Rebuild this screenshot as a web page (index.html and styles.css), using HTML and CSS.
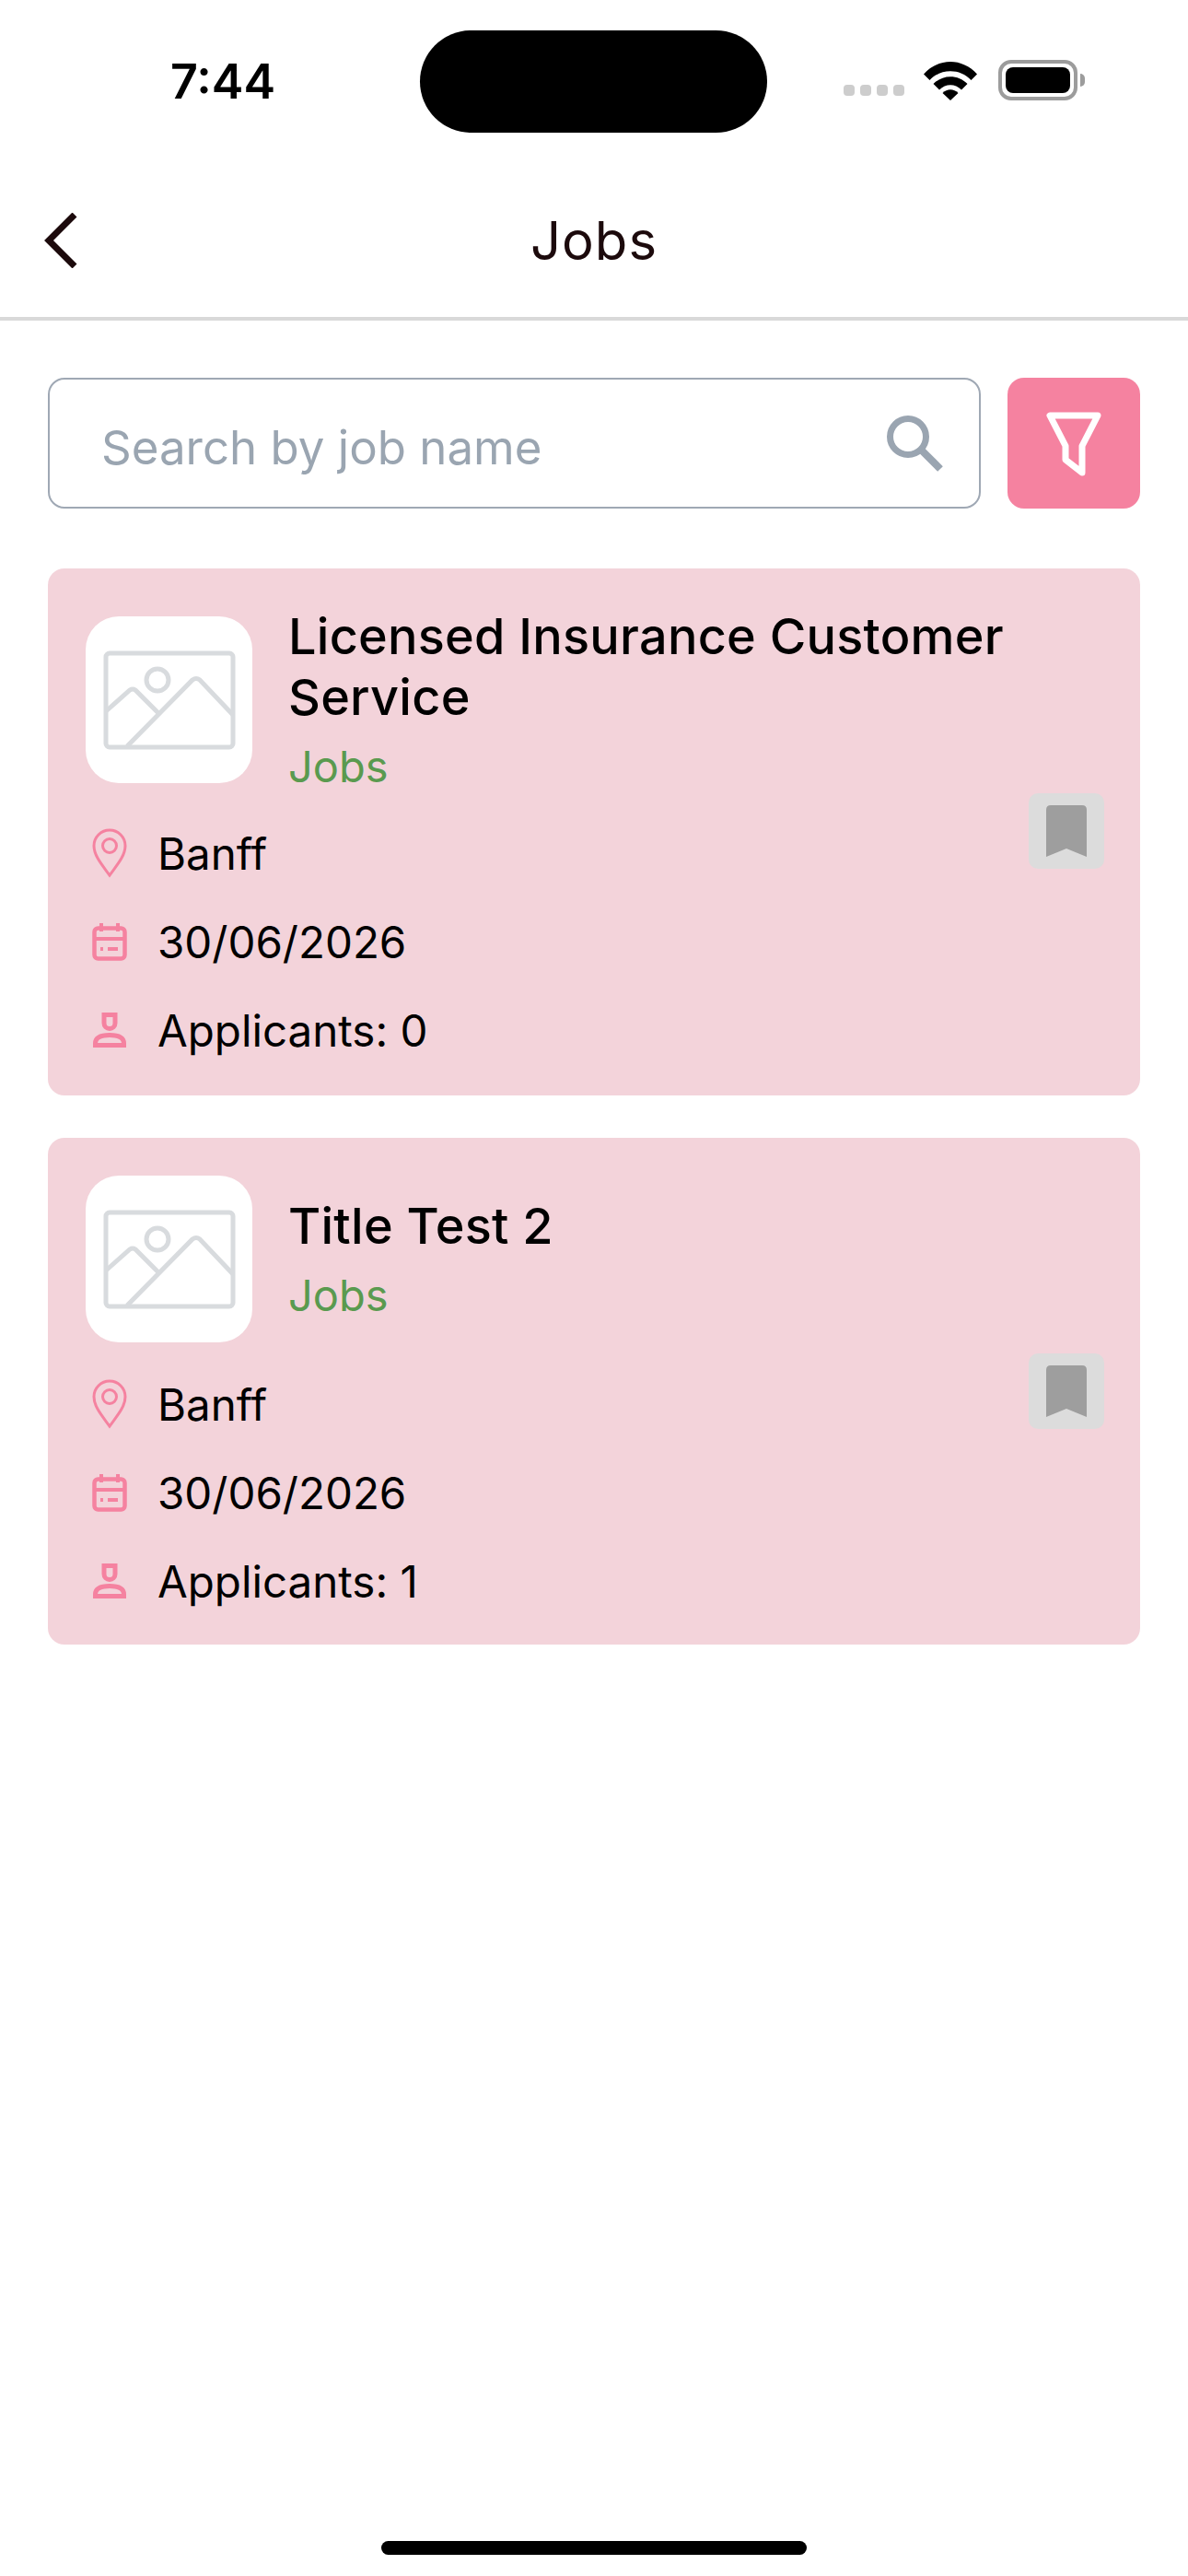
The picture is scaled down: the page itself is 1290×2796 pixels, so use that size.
FILE: index.html
```html
<!DOCTYPE html>
<html lang="en">
<head>
    <meta charset="UTF-8">
    <meta name="viewport" content="width=device-width, initial-scale=1.0">
    <title>Jobs</title>
    <link rel="stylesheet" href="styles.css">
</head>
<body>
    <div class="page">
        <div class="status-bar">
            <span class="time">7:44</span>
            <div class="island"></div>
            <div class="status-icons">
                <div class="signal"><span></span><span></span><span></span><span></span></div>
                <svg class="wifi" width="58" height="42" viewBox="0 0 58 42">
                    <path d="M0 13.5C16-4.500 42-4.500 58 13.500L51.500 20C39.500 7 18.500 7 6.500 20Z" fill="#000"/>
                    <path d="M10.500 24C20.500 13.500 37.500 13.500 47.500 24L41 30.500C34 23.500 24 23.500 17 30.500Z" fill="#000"/>
                    <path d="M20.500 34C25.500 29 32.500 29 37.500 34L29 42Z" fill="#000"/>
                </svg>
                <div class="battery"><div class="battery-level"></div></div>
                <div class="battery-cap"></div>
            </div>
        </div>

        <header class="top-bar">
            <svg class="back" width="36" height="60" viewBox="0 0 36 60">
                <path d="M33 2L5 30l28 28" fill="none" stroke="#1c0a0c" stroke-width="7"/>
            </svg>
            <h1>Jobs</h1>
        </header>

        <main class="content">
            <div class="search-row">
                <div class="search-box">
                    <span class="search-text">Search by job name</span>
                    <svg width="64" height="64" viewBox="0 0 64 64">
                        <circle cx="25" cy="25" r="19.500" fill="none" stroke="#9aa5b1" stroke-width="7"/>
                        <path d="M39 39l21 21" fill="none" stroke="#9aa5b1" stroke-width="8"/>
                    </svg>
                </div>
                <button class="filter-btn">
                    <svg width="64" height="72" viewBox="0 0 64 72">
                        <path d="M6 6h52L41 39v29L23 54V39Z" fill="none" stroke="#fff" stroke-width="7" stroke-linejoin="round"/>
                    </svg>
                </button>
            </div>

            <div class="job-card card-long">
                <div class="job-body">
                    <div class="job-head">
                        <div class="thumb">
                            <svg width="144" height="108" viewBox="0 0 144 108">
                                <rect x="3" y="3" width="138" height="102" rx="4" fill="none" stroke="#d8dbde" stroke-width="5"/>
                                <circle cx="59" cy="32" r="12" fill="none" stroke="#d8dbde" stroke-width="5"/>
                                <path d="M3 66l26-23q3-2 6 0l27 27" fill="none" stroke="#d8dbde" stroke-width="5"/>
                                <path d="M26 104l71-72q4-3 8 0l36 38" fill="none" stroke="#d8dbde" stroke-width="5"/>
                            </svg>
                        </div>
                        <div class="job-title">
                            <h2>Licensed Insurance Customer Service</h2>
                            <p class="job-type">Jobs</p>
                        </div>
                    </div>
                    <ul class="job-info">
                        <li>
                            <svg width="38" height="54" viewBox="0 0 38 54">
                                <path d="M19 51C11 40 2 30 2 19a17 17 0 0 1 34 0C36 30 27 40 19 51Z" fill="none" stroke="#f582a0" stroke-width="3"/>
                                <circle cx="19" cy="19" r="7.500" fill="none" stroke="#f582a0" stroke-width="3"/>
                            </svg>
                            Banff
                        </li>
                        <li>
                            <svg width="38" height="42" viewBox="0 0 38 42">
                                <rect x="2.500" y="6.500" width="33" height="33" rx="4" fill="none" stroke="#f582a0" stroke-width="4.500"/>
                                <path d="M2 18h34M10 1v9M28 1v9M9 29h3M17 29h11" fill="none" stroke="#f582a0" stroke-width="4"/>
                            </svg>
                            30/06/2026
                        </li>
                        <li>
                            <svg width="36" height="38" viewBox="0 0 36 38">
                                <path d="M12 2.500h12v9a6 6 0 0 1-12 0Z" fill="none" stroke="#f582a0" stroke-width="5"/>
                                <path d="M2.500 35.500v-2c0-6 5.500-9 15.500-9s15.500 3 15.500 9v2Z" fill="none" stroke="#f582a0" stroke-width="5"/>
                            </svg>
                            Applicants: 0
                        </li>
                    </ul>
                </div>
                <button class="bookmark">
                    <svg width="44" height="56" viewBox="0 0 44 56"><path d="M0 5q0-5 5-5h34q5 0 5 5v51L22 47 0 56Z" fill="#9e9e9e"/></svg>
                </button>
            </div>

            <div class="job-card card-short">
                <div class="job-body">
                    <div class="job-head">
                        <div class="thumb">
                            <svg width="144" height="108" viewBox="0 0 144 108">
                                <rect x="3" y="3" width="138" height="102" rx="4" fill="none" stroke="#d8dbde" stroke-width="5"/>
                                <circle cx="59" cy="32" r="12" fill="none" stroke="#d8dbde" stroke-width="5"/>
                                <path d="M3 66l26-23q3-2 6 0l27 27" fill="none" stroke="#d8dbde" stroke-width="5"/>
                                <path d="M26 104l71-72q4-3 8 0l36 38" fill="none" stroke="#d8dbde" stroke-width="5"/>
                            </svg>
                        </div>
                        <div class="job-title">
                            <h2>Title Test 2</h2>
                            <p class="job-type">Jobs</p>
                        </div>
                    </div>
                    <ul class="job-info">
                        <li>
                            <svg width="38" height="54" viewBox="0 0 38 54">
                                <path d="M19 51C11 40 2 30 2 19a17 17 0 0 1 34 0C36 30 27 40 19 51Z" fill="none" stroke="#f582a0" stroke-width="3"/>
                                <circle cx="19" cy="19" r="7.500" fill="none" stroke="#f582a0" stroke-width="3"/>
                            </svg>
                            Banff
                        </li>
                        <li>
                            <svg width="38" height="42" viewBox="0 0 38 42">
                                <rect x="2.500" y="6.500" width="33" height="33" rx="4" fill="none" stroke="#f582a0" stroke-width="4.500"/>
                                <path d="M2 18h34M10 1v9M28 1v9M9 29h3M17 29h11" fill="none" stroke="#f582a0" stroke-width="4"/>
                            </svg>
                            30/06/2026
                        </li>
                        <li>
                            <svg width="36" height="38" viewBox="0 0 36 38">
                                <path d="M12 2.500h12v9a6 6 0 0 1-12 0Z" fill="none" stroke="#f582a0" stroke-width="5"/>
                                <path d="M2.500 35.500v-2c0-6 5.500-9 15.500-9s15.500 3 15.500 9v2Z" fill="none" stroke="#f582a0" stroke-width="5"/>
                            </svg>
                            Applicants: 1
                        </li>
                    </ul>
                </div>
                <button class="bookmark">
                    <svg width="44" height="56" viewBox="0 0 44 56"><path d="M0 5q0-5 5-5h34q5 0 5 5v51L22 47 0 56Z" fill="#9e9e9e"/></svg>
                </button>
            </div>
        </main>

        <div class="home-bar"><span></span></div>
    </div>
</body>
</html>
```

FILE: styles.css
```css
* {
    box-sizing: border-box;
}

body {
    margin: 0;
    background: #fff;
    font-family: 'Inter', sans-serif;
    color: #000;
}

.page {
    width: 1290px;
    height: 2796px;
    display: flex;
    flex-direction: column;
}

/* status bar */
.status-bar {
    height: 144px;
    padding-top: 33px;
    display: flex;
    align-items: flex-start;
}

.time {
    width: 456px;
    padding: 26px 0 0 185px;
    font-family: 'Inter', sans-serif;
    font-size: 52px;
    line-height: 60px;
    font-weight: 600;
}

.island {
    width: 377px;
    height: 111px;
    background: #000;
    border-radius: 56px;
}

.status-icons {
    margin-left: 83px;
    padding-top: 32px;
    display: flex;
    align-items: flex-end;
    height: 76px;
}

.signal {
    display: flex;
    gap: 6px;
    margin-bottom: 5px;
}

.signal span {
    width: 12px;
    height: 12px;
    border-radius: 4px;
    background: #cdcdcd;
}

.wifi {
    margin-left: 21px;
}

.battery {
    width: 86px;
    height: 44px;
    margin-left: 23px;
    padding: 4px;
    border: 4px solid #9c9c9c;
    border-radius: 14px;
}

.battery-level {
    width: 100%;
    height: 100%;
    background: #000;
    border-radius: 8px;
}

.battery-cap {
    width: 5px;
    height: 14px;
    margin: 0 0 15px 3px;
    background: #9c9c9c;
    border-radius: 0 5px 5px 0;
}

/* header */
.top-bar {
    height: 204px;
    padding-left: 48px;
    padding-top: 34px;
    display: flex;
    align-items: center;
    border-bottom: 4px solid #d9d9d9;
    position: relative;
}

.top-bar h1 {
    margin: 0;
    position: absolute;
    left: 0;
    right: 0;
    text-align: center;
    font-size: 58px;
    font-weight: 400;
    letter-spacing: 1px;
    color: #1c0a0c;
}

/* search */
.content {
    flex: 1;
    padding: 62px 52px 0;
}

.search-row {
    display: flex;
    gap: 29px;
    margin-bottom: 65px;
}

.search-box {
    flex: 1;
    height: 142px;
    padding: 0 38px 0 56px;
    display: flex;
    align-items: center;
    justify-content: space-between;
    border: 2px solid #9fa8b4;
    border-radius: 18px;
}

.search-text {
    padding-top: 9px;
    font-size: 51px;
    color: #9aa5b1;
}

.filter-btn {
    width: 144px;
    height: 142px;
    padding: 0;
    border: none;
    border-radius: 18px;
    background: #f582a0;
    display: flex;
    align-items: center;
    justify-content: center;
}

/* cards */
.job-card {
    display: flex;
    align-items: center;
    justify-content: space-between;
    padding: 41px 39px 23px 41px;
    margin-bottom: 46px;
    background: #f3d3da;
    border-radius: 18px;
}

.card-short {
    padding-bottom: 21px;
}

.job-body {
    flex: 1;
}

.job-head {
    display: flex;
    align-items: center;
    gap: 39px;
    margin-bottom: 19px;
}

.card-long .job-head {
    margin-bottom: 17px;
}

.thumb {
    flex: none;
    width: 181px;
    height: 181px;
    display: flex;
    align-items: center;
    justify-content: center;
    background: #fff;
    border-radius: 36px;
}

.job-title {
    flex: 1;
}

.job-title h2 {
    margin: 0;
    font-size: 54px;
    line-height: 66px;
    font-weight: 500;
    letter-spacing: 0.25px;
}

.job-type {
    margin: 13px 0 0;
    font-size: 47px;
    line-height: 58px;
    color: #5a9a4f;
}

.job-info {
    list-style: none;
    margin: 0;
    padding: 0;
}

.job-info li {
    height: 96px;
    display: flex;
    align-items: center;
    font-size: 47.5px;
}

.job-info svg {
    width: 38px;
    margin: 0 33px 0 7px;
}

.bookmark {
    flex: none;
    width: 82px;
    height: 82px;
    margin-bottom: 21px;
    padding: 0;
    border: none;
    border-radius: 10px;
    background: #dcdcdc;
    display: flex;
    align-items: center;
    justify-content: center;
}

/* home indicator */
.home-bar {
    height: 38px;
    display: flex;
    justify-content: center;
}

.home-bar span {
    width: 462px;
    height: 15px;
    background: #000;
    border-radius: 8px;
}
```
